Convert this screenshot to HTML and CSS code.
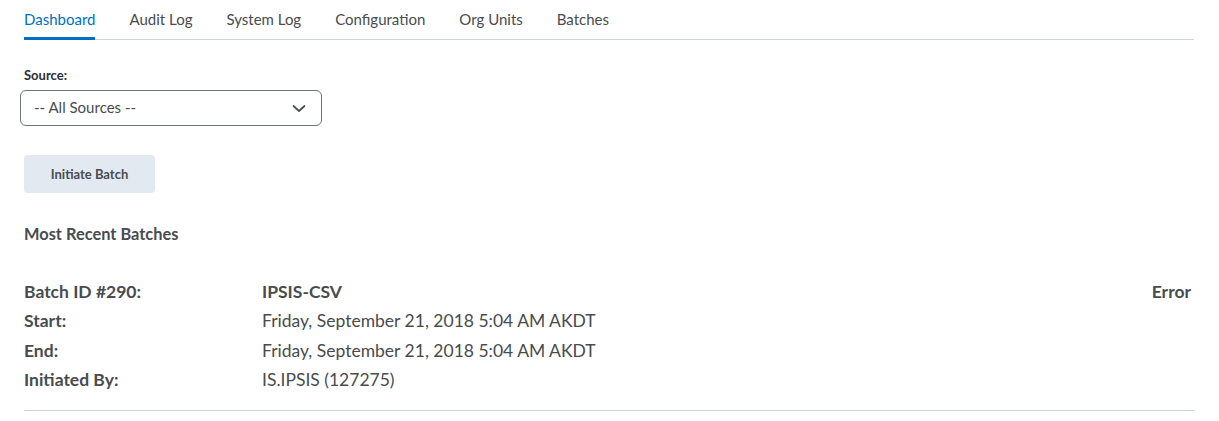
FILE: index.html
```html
<!DOCTYPE html>
<html>
<head>
<meta charset="utf-8">
<link rel="stylesheet" href="styles.css">
</head>
<body>
<div class="page">
  <nav class="tabs">
    <a class="tab active">Dashboard</a>
    <a class="tab">Audit Log</a>
    <a class="tab">System Log</a>
    <a class="tab">Configuration</a>
    <a class="tab">Org Units</a>
    <a class="tab">Batches</a>
  </nav>
  <div class="field">
    <label class="label">Source:</label>
    <div class="select">
      <span>-- All Sources --</span>
      <svg class="chev" width="14" height="9" viewBox="0 0 14 9"><path d="M1.5 2l5.5 5 5.5-5" fill="none" stroke="#494c4e" stroke-width="1.7" stroke-linecap="round" stroke-linejoin="round"/></svg>
    </div>
  </div>
  <div class="actions"><button class="btn">Initiate Batch</button></div>
  <h2 class="heading">Most Recent Batches</h2>
  <div class="batch">
    <div class="row">
      <span class="key">Batch ID #290:</span>
      <span class="val strong">IPSIS-CSV</span>
      <span class="status">Error</span>
    </div>
    <div class="row">
      <span class="key">Start:</span>
      <span class="val">Friday, September 21, 2018 5:04 AM AKDT</span>
    </div>
    <div class="row">
      <span class="key">End:</span>
      <span class="val">Friday, September 21, 2018 5:04 AM AKDT</span>
    </div>
    <div class="row">
      <span class="key">Initiated By:</span>
      <span class="val">IS.IPSIS (127275)</span>
    </div>
  </div>
</div>
</body>
</html>
```
FILE: styles.css
```css
* { box-sizing: border-box; }
body {
  margin: 0;
  font-family: Lato, "Noto Sans", sans-serif;
  color: #494c4e;
  background: #fff;
}
.page {
  padding: 0 25px 0 24px;
}
.tabs {
  display: flex;
  gap: 34px;
  border-bottom: 1px solid #cdd5dc;
  height: 40px;
}
.tab {
  font-size: 15px;
  line-height: 20px;
  padding-top: 9px;
  color: #494c4e;
  height: 40px;
  border-bottom: 3px solid transparent;
}
.tab.active {
  color: #006fbf;
  border-bottom-color: #006fbf;
}
.field {
  margin-top: 26px;
}
.label {
  display: block;
  font-size: 13px;
  line-height: 18px;
  font-weight: 700;
  margin-bottom: 6px;
  color: #2d2f30;
}
.select {
  margin-left: -4px;
  width: 302px;
  height: 36px;
  border: 1px solid #6e7477;
  border-radius: 6px;
  display: flex;
  align-items: center;
  justify-content: space-between;
  padding: 0 15px 2px 13px;
  font-size: 15px;
  color: #494c4e;
}
.chev { display: block; margin-top: 2px; }
.actions { margin-top: 29px; }
.btn {
  width: 131px;
  height: 38px;
  border: none;
  border-radius: 4px;
  background: #e3e9f1;
  font-family: Lato, sans-serif;
  font-weight: 700;
  font-size: 13px;
  padding-bottom: 2px;
  color: #494c4e;
}
.heading {
  margin: 31px 0 0;
  font-size: 16.4px;
  line-height: 20px;
  font-weight: 700;
}
.batch {
  margin-top: 32.5px;
  padding-bottom: 15.5px;
  border-bottom: 1px solid #cdd5dc;
}
.row {
  display: flex;
  font-size: 17.5px;
  line-height: 29.5px;
}
.key { width: 238px; font-weight: 700; }
.val { flex: 1; }
.strong { font-weight: 700; }
.status { font-weight: 700; margin-right: 3px; }
```
